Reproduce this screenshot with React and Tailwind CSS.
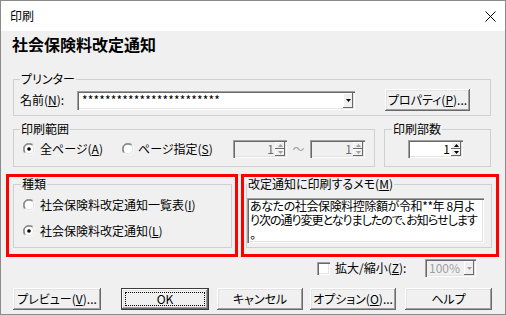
import React from 'react';

// windows classic frames
const sunken = 'shadow-[inset_1px_1px_0_#a0a0a0,inset_2px_2px_0_#696969,inset_-1px_-1px_0_#ffffff,inset_-2px_-2px_0_#e3e3e3]';
const raised = 'shadow-[inset_-1px_-1px_0_#696969,inset_1px_1px_0_#ffffff,inset_-2px_-2px_0_#a0a0a0,inset_2px_2px_0_#e3e3e3]';
const raisedSm = 'shadow-[inset_-1px_-1px_0_#696969,inset_1px_1px_0_#ffffff]';

const Radio = ({ checked }) => (
  <svg width="12" height="12" viewBox="0 0 12 12" className="shrink-0">
    <path d="M1.76 10.24A6 6 0 0 1 10.24 1.76" fill="none" stroke="#a0a0a0" />
    <path d="M10.24 1.76A6 6 0 0 1 1.76 10.24" fill="none" stroke="#ffffff" />
    <path d="M2.46 9.54A5 5 0 0 1 9.54 2.46" fill="none" stroke="#696969" />
    <path d="M9.54 2.46A5 5 0 0 1 2.46 9.54" fill="none" stroke="#e3e3e3" />
    <circle cx="6" cy="6" r="4" fill="#ffffff" />
    {checked && <circle cx="6" cy="6" r="1.8" fill="#000000" />}
  </svg>
);

const Arrow = ({ up, color = '#000' }) => (
  <svg width="5" height="3" viewBox="0 0 5 3">
    <path d={up ? 'M2.5 0L5 3H0Z' : 'M0 0H5L2.5 3Z'} fill={color} />
  </svg>
);

const Spin = ({ className, disabled }) => (
  <div className={`flex h-[18px] p-[2px] ${sunken} ${disabled ? 'bg-[#f0f0f0] text-[#6d6d6d]' : 'bg-white'} ${className}`}>
    <div className="flex-1 text-right pr-[1px] leading-[14px]">1</div>
    <div className="flex flex-col w-[10px]">
      <div className={`h-[7px] flex items-center justify-center bg-[#f0f0f0] ${raisedSm}`}>
        <Arrow up color={disabled ? '#a0a0a0' : '#000'} />
      </div>
      <div className={`h-[7px] flex items-center justify-center bg-[#f0f0f0] ${raisedSm}`}>
        <Arrow color={disabled ? '#a0a0a0' : '#000'} />
      </div>
    </div>
  </div>
);

const Btn = ({ className, children }) => (
  <button type="button" className={`h-[22px] flex items-center justify-center bg-[#f0f0f0] ${raised} ${className}`}>
    {children}
  </button>
);

export default function App() {
  return (
    <div className="w-[506px] h-[315px] border border-[#8a8a8a] bg-[#f0f0f0] flex flex-col overflow-hidden text-[12px] leading-[14px] text-black font-['Noto_Sans_CJK_JP','Noto_Sans',sans-serif] [font-feature-settings:'palt']">
      {/* title bar */}
      <div className="h-[30px] shrink-0 bg-white flex items-center justify-between pl-[9px] pr-[9px]">
        <span>印刷</span>
        <svg width="11" height="11" viewBox="0 0 11 11">
          <path d="M0.5 0.5L10.5 10.5M10.5 0.5L0.5 10.5" stroke="#000" strokeWidth="1" />
        </svg>
      </div>

      <div className="mt-[3px] ml-[11px] text-[16px] leading-[20px] font-bold">社会保険料改定通知</div>

      {/* printer */}
      <fieldset className="mt-[18px] ml-[12px] w-[478px] border border-[#d0d0d0] pt-[3px] pb-[4px]">
        <legend className="ml-[6px] px-[1px] leading-[14px]">プリンター</legend>
        <div className="flex items-center h-[22px] pl-[6px]">
          <span className="w-[57px]">名前(<u>N</u>):</span>
          <div className={`w-[278px] h-[19px] bg-white flex items-center pl-[5px] pr-[2px] ${sunken}`}>
            <span className="flex-1 tracking-[0.15px]">************************</span>
            <div className={`w-[10px] h-[15px] flex items-center justify-center bg-[#f0f0f0] ${raisedSm}`}>
              <Arrow />
            </div>
          </div>
          <Btn className="ml-[30px] w-[85px]">プロパティ(<u>P</u>)...</Btn>
        </div>
      </fieldset>

      {/* range + copies */}
      <div className="flex mt-[6px] ml-[12px] gap-[9px]">
        <fieldset className="w-[362px] border border-[#d0d0d0] pt-[4px] pb-[8px]">
          <legend className="ml-[6px] px-[1px] leading-[14px]">印刷範囲</legend>
          <div className="flex items-center h-[18px] pl-[9px]">
            <label className="w-[99px] flex items-center gap-[5px]">
              <Radio checked />
              <span>全ページ(<u>A</u>)</span>
            </label>
            <label className="w-[111px] flex items-center gap-[4px]">
              <Radio />
              <span>ページ指定(<u>S</u>)</span>
            </label>
            <Spin disabled className="w-[54px]" />
            <span className="w-[23px] text-center text-[#a0a0a0]">～</span>
            <Spin disabled className="w-[55px]" />
          </div>
        </fieldset>
        <fieldset className="w-[107px] border border-[#d0d0d0] pt-[4px] pb-[8px]">
          <legend className="ml-[7px] px-[1px] leading-[14px]">印刷部数</legend>
          <div className="flex items-center h-[18px] pl-[23px]">
            <Spin className="w-[55px]" />
          </div>
        </fieldset>
      </div>

      {/* highlighted groups */}
      <div className="flex mt-[7px] ml-[5px]">
        <div className="w-[232px] border-[3px] border-[#ff0000] pl-[4px] pb-[6px]">
          <fieldset className="w-[219px] border border-[#d0d0d0] pt-[6px] pb-[8px]">
            <legend className="ml-[7px] px-[1px] leading-[14px]">種類</legend>
            <div className="flex flex-col gap-[10px] pl-[9px]">
              <label className="h-[16px] flex items-center gap-[5px]">
                <Radio />
                <span>社会保険料改定通知一覧表(<u>I</u>)</span>
              </label>
              <label className="h-[16px] flex items-center gap-[5px]">
                <Radio checked />
                <span>社会保険料改定通知(<u>L</u>)</span>
              </label>
            </div>
          </fieldset>
        </div>
        <div className="ml-[3px] w-[258px] border-[3px] border-[#ff0000] pl-[2px] pb-[6px]">
          <fieldset className="w-[246px] border border-[#d0d0d0] pt-[7px] pb-[4px]">
            <legend className="ml-0 px-[1px] leading-[14px]">改定通知に印刷するメモ(<u>M</u>)</legend>
            <div className={`w-[237px] h-[45px] bg-white pl-[3px] pt-[1px] leading-[14px] whitespace-nowrap ${sunken}`}>
              <div className="tracking-[-0.4px]">あなたの社会保険料控除額が令和**年 8月よ</div>
              <div className="tracking-[-1px]">り次の通り変更となりましたので、お知らせします</div>
              <div>。</div>
            </div>
          </fieldset>
        </div>
      </div>

      {/* zoom */}
      <div className="flex items-center h-[18px] mt-[2px] pl-[316px]">
        <div className={`w-[13px] h-[13px] bg-white ${sunken}`} />
        <span className="ml-[5px] w-[90px]">拡大/縮小(<u>Z</u>):</span>
        <div className={`w-[51px] h-[18px] flex items-center pl-[4px] pr-[2px] text-[#a0a0a0] bg-[#f0f0f0] ${sunken}`}>
          <span className="flex-1">100%</span>
          <div className={`w-[10px] h-[14px] flex items-center justify-center bg-[#f0f0f0] ${raisedSm}`}>
            <Arrow color="#a0a0a0" />
          </div>
        </div>
      </div>

      {/* buttons */}
      <div className="flex mt-[11px] ml-[12px]">
        <Btn className="w-[88px]">プレビュー(<u>V</u>)...</Btn>
        <button type="button" className={`ml-[20px] w-[88px] h-[22px] p-[3px] border border-[#3c3c3c] bg-[#f0f0f0] ${raised}`}>
          <div className="w-full h-full border border-dotted border-black flex items-center justify-center">OK</div>
        </button>
        <Btn className="ml-[8px] w-[86px]">キャンセル</Btn>
        <Btn className="ml-[7px] w-[86px]">オプション(<u>O</u>)...</Btn>
        <Btn className="ml-[9px] w-[87px]">ヘルプ</Btn>
      </div>
    </div>
  );
}
